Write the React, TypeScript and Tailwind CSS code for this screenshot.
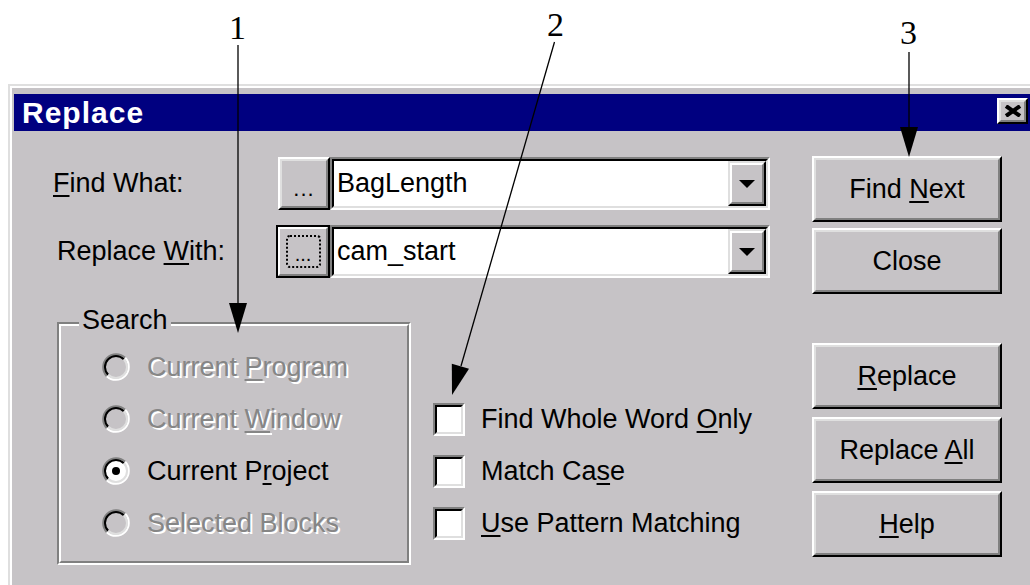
import React from "react";

const U = ({ children }: { children: React.ReactNode }) => (
  <span className="underline decoration-[2px] underline-offset-[3px]">{children}</span>
);

const Btn = ({ children, className = "" }: { children: React.ReactNode; className?: string }) => (
  <div className={`border-2 border-t-white border-l-white border-b-black border-r-black ${className}`}>
    <div className="h-full border-2 border-t-[#dfdfdf] border-l-[#dfdfdf] border-b-[#808080] border-r-[#808080] flex items-center justify-center">
      {children}
    </div>
  </div>
);

const Combo = ({ value }: { value: string }) => (
  <div className="w-[440px] h-full border-2 border-t-[#808080] border-l-[#808080] border-b-white border-r-white">
    <div className="h-full border-2 border-t-black border-l-black border-b-[#dfdfdf] border-r-[#dfdfdf] bg-white flex items-stretch">
      <div className="flex-1 flex items-center pl-[3px] text-black">{value}</div>
      <div className="w-[38px] border-2 border-t-[#dfdfdf] border-l-[#dfdfdf] border-b-black border-r-black bg-[#c6c3c6]">
        <div className="h-full border-2 border-t-white border-l-white border-b-[#808080] border-r-[#808080] flex items-center justify-center">
          <svg width="16" height="8" viewBox="0 0 16 8">
            <polygon points="0,0 16,0 8,8" fill="#000" />
          </svg>
        </div>
      </div>
    </div>
  </div>
);

const Radio = ({ checked, disabled }: { checked?: boolean; disabled?: boolean }) => (
  <svg width="28" height="28" viewBox="0 0 28 28" className="shrink-0">
    <circle cx="14" cy="14" r="12" fill={disabled ? "#c6c3c6" : "#ffffff"} />
    <path d="M4.81 23.19 A13 13 0 0 1 23.19 4.81" stroke="#808080" strokeWidth="2" fill="none" />
    <path d="M23.19 4.81 A13 13 0 0 1 4.81 23.19" stroke="#ffffff" strokeWidth="2" fill="none" />
    <path d="M6.22 21.78 A11 11 0 0 1 21.78 6.22" stroke="#000000" strokeWidth="2" fill="none" />
    <path d="M21.78 6.22 A11 11 0 0 1 6.22 21.78" stroke="#dfdfdf" strokeWidth="2" fill="none" />
    {checked && <circle cx="14" cy="14" r="4" fill="#000" />}
  </svg>
);

const Check = () => (
  <div className="w-[32px] h-[33px] shrink-0 border-2 border-t-[#808080] border-l-[#808080] border-b-white border-r-white">
    <div className="h-full border-2 border-t-black border-l-black border-b-[#dfdfdf] border-r-[#dfdfdf] bg-white" />
  </div>
);

const dis = "text-[#868686] [text-shadow:2px_2px_0_#ffffff]";

export default function App() {
  return (
    <div className="relative w-[1030px] h-[585px] overflow-hidden bg-white pt-[84px] pl-[8px] font-['Liberation_Sans',Arial,sans-serif] text-[27px] leading-none text-black">
      <div className="w-[1040px] h-[520px] border-t-2 border-l-2 border-[#dfdfdf] bg-[#c6c3c6]">
        <div className="h-full border-t-2 border-l-2 border-white pt-[6px] pl-[2px]">
          {/* Title bar */}
          <div className="h-[37px] w-[1018px] bg-[#000080] flex items-center justify-between pl-[8px] pr-[4px]">
            <span className="text-white font-bold text-[30px] tracking-[1px]">Replace</span>
            <div className="self-start mt-[4px] w-[31px] h-[26px] border-2 border-t-white border-l-white border-b-black border-r-black bg-[#c6c3c6]">
              <div className="h-full border-2 border-t-[#dfdfdf] border-l-[#dfdfdf] border-b-[#808080] border-r-[#808080] flex items-center justify-center">
                <svg width="18" height="12" viewBox="0 0 18 12">
                  <path d="M2 1 L16 11 M16 1 L2 11" stroke="#000" strokeWidth="4" />
                </svg>
              </div>
            </div>
          </div>

          {/* Body */}
          <div className="flex">
            <div className="w-[798px]">
              <div className="flex items-center h-[53px] mt-[26px] pl-[39px]">
                <div className="w-[223px]">
                  <U>F</U>ind What:
                </div>
                <div className="w-[54px] h-full flex justify-end">
                  <Btn className="w-[52px] h-full">
                    <span className="text-[22px] tracking-[1px] mt-[10px]">...</span>
                  </Btn>
                </div>
                <Combo value="BagLength" />
              </div>

              <div className="flex items-center h-[53px] mt-[15px] pl-[43px]">
                <div className="w-[219px]">
                  Replace <U>W</U>ith:
                </div>
                <div className="w-[54px] h-full border-2 border-black">
                  <div className="h-full border-2 border-t-white border-l-white border-b-[#808080] border-r-[#808080] flex items-center justify-center">
                    <div className="w-[35px] h-[33px] border-2 border-dotted border-black rounded-[4px] flex items-end justify-center">
                      <span className="text-[20px] leading-none mb-[2px]">...</span>
                    </div>
                  </div>
                </div>
                <Combo value="cam_start" />
              </div>

              <div className="flex mt-[44px] pl-[43px]">
                {/* Group box */}
                <div className="relative w-[354px] h-[243px] border-2 border-t-[#808080] border-l-[#808080] border-b-white border-r-white">
                  <div className="h-full border-2 border-t-white border-l-white border-b-[#808080] border-r-[#808080] pt-[15px] pl-[41px]">
                    <div className="flex items-center h-[52px] gap-[17px]">
                      <Radio disabled />
                      <span className={dis}>
                        Current <U>P</U>rogram
                      </span>
                    </div>
                    <div className="flex items-center h-[52px] gap-[17px]">
                      <Radio disabled />
                      <span className={dis}>
                        Current <U>W</U>indow
                      </span>
                    </div>
                    <div className="flex items-center h-[52px] gap-[17px]">
                      <Radio checked />
                      <span>
                        Current P<U>r</U>oject
                      </span>
                    </div>
                    <div className="flex items-center h-[52px] gap-[17px]">
                      <Radio disabled />
                      <span className={dis}>Selected Blocks</span>
                    </div>
                  </div>
                  <span className="absolute left-[20px] -top-[19px] px-[3px] bg-[#c6c3c6] leading-[30px]">Search</span>
                </div>

                {/* Checkboxes */}
                <div className="ml-[22px] pt-[71px]">
                  <div className="flex items-center h-[52px] gap-[16px]">
                    <Check />
                    <span>
                      Find Whole Word <U>O</U>nly
                    </span>
                  </div>
                  <div className="flex items-center h-[52px] gap-[16px]">
                    <Check />
                    <span>
                      Match Ca<U>s</U>e
                    </span>
                  </div>
                  <div className="flex items-center h-[52px] gap-[16px]">
                    <Check />
                    <span>
                      <U>U</U>se Pattern Matching
                    </span>
                  </div>
                </div>
              </div>
            </div>

            {/* Right buttons */}
            <div className="w-[190px] pt-[25px] flex flex-col">
              <Btn className="h-[66px]">
                <span>
                  Find <U>N</U>ext
                </span>
              </Btn>
              <Btn className="h-[66px] mt-[6px]">
                <span>Close</span>
              </Btn>
              <Btn className="h-[66px] mt-[49px]">
                <span>
                  <U>R</U>eplace
                </span>
              </Btn>
              <Btn className="h-[66px] mt-[8px]">
                <span>
                  Replace <U>A</U>ll
                </span>
              </Btn>
              <Btn className="h-[66px] mt-[8px]">
                <span>
                  <U>H</U>elp
                </span>
              </Btn>
            </div>
          </div>
        </div>
      </div>

      {/* Callout annotations */}
      <svg className="absolute left-0 top-0 pointer-events-none" width="1030" height="585" viewBox="0 0 1030 585">
        <line x1="238" y1="45" x2="238" y2="306" stroke="#000" strokeWidth="1.3" />
        <polygon points="229,303 247,303 238,333" fill="#000" />
        <line x1="554.5" y1="42" x2="461" y2="366" stroke="#000" strokeWidth="1.3" />
        <polygon points="451.8,363.7 469,368.7 452,395" fill="#000" />
        <line x1="909" y1="52" x2="909" y2="130" stroke="#000" strokeWidth="1.3" />
        <polygon points="900,127 918,127 909,157" fill="#000" />
      </svg>
      <span className="absolute left-[229px] top-[11px] font-['Liberation_Serif',serif] text-[34px] leading-none">1</span>
      <span className="absolute left-[547px] top-[8px] font-['Liberation_Serif',serif] text-[34px] leading-none">2</span>
      <span className="absolute left-[900px] top-[16px] font-['Liberation_Serif',serif] text-[34px] leading-none">3</span>
    </div>
  );
}
